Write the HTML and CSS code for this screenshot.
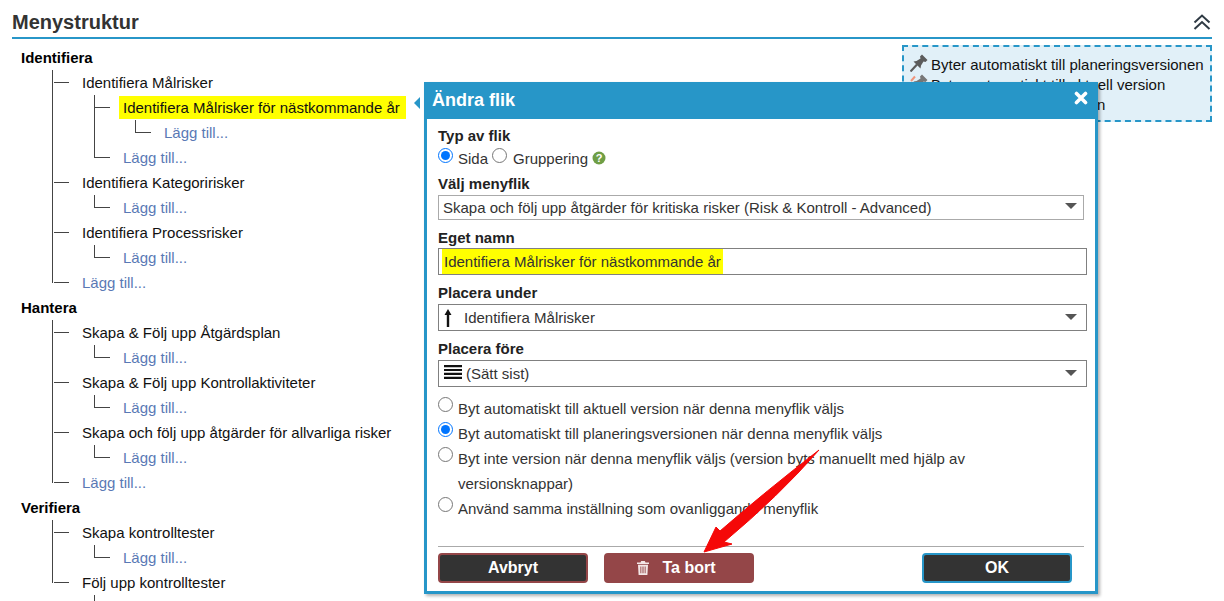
FILE: index.html
```html
<!DOCTYPE html>
<html lang="sv">
<head>
<meta charset="utf-8">
<title>Menystruktur</title>
<link rel="stylesheet" href="styles.css">
</head>
<body>
<main class="page">
  <header class="section-head">
    <h1>Menystruktur</h1>
    <svg class="collapse" viewBox="0 0 18 16" aria-hidden="true"><path d="M1.5 8.500 9 1.500l7.500 7M1.500 15 9 8l7.500 7" fill="none" stroke="#2f3a44" stroke-width="2"/></svg>
  </header>
  <div class="content">
    <nav class="tree">
      <div class="group">Identifiera</div>
      <ul class="lvl1">
        <li><span>Identifiera Målrisker</span>
          <ul class="lvl2">
            <li><span class="mark">Identifiera Målrisker för nästkommande år</span>
              <ul class="lvl3"><li><a>Lägg till...</a></li></ul>
            </li>
            <li><a>Lägg till...</a></li>
          </ul>
        </li>
        <li><span>Identifiera Kategoririsker</span>
          <ul class="lvl2"><li><a>Lägg till...</a></li></ul>
        </li>
        <li><span>Identifiera Processrisker</span>
          <ul class="lvl2"><li><a>Lägg till...</a></li></ul>
        </li>
        <li><a>Lägg till...</a></li>
      </ul>
      <div class="group">Hantera</div>
      <ul class="lvl1">
        <li><span>Skapa &amp; Följ upp Åtgärdsplan</span>
          <ul class="lvl2"><li><a>Lägg till...</a></li></ul>
        </li>
        <li><span>Skapa &amp; Följ upp Kontrollaktiviteter</span>
          <ul class="lvl2"><li><a>Lägg till...</a></li></ul>
        </li>
        <li><span>Skapa och följ upp åtgärder för allvarliga risker</span>
          <ul class="lvl2"><li><a>Lägg till...</a></li></ul>
        </li>
        <li><a>Lägg till...</a></li>
      </ul>
      <div class="group">Verifiera</div>
      <ul class="lvl1">
        <li><span>Skapa kontrolltester</span>
          <ul class="lvl2"><li><a>Lägg till...</a></li></ul>
        </li>
        <li class="cut"><span>Följ upp kontrolltester</span>
          <ul class="lvl2"><li class="stub"></li></ul>
        </li>
      </ul>
    </nav>
    <aside class="legend">
      <div class="legend-row">
        <svg class="pin" viewBox="0 0 18 18" aria-hidden="true"><path d="M12 0.500 17.500 6 15.500 8 13.500 7.500 11 11.500 10.500 14.500 3.500 7.500 6.500 7 10.500 4.500 10 2.500z" fill="#5c5c5c"/><path d="M7 10.500.5 17.500" stroke="#5c5c5c" stroke-width="2.200"/></svg>
        <span>Byter automatiskt till planeringsversionen</span>
      </div>
      <div class="legend-row">
        <svg class="pin" viewBox="0 0 18 18" aria-hidden="true"><path d="M1 7 5 2.500" stroke="#f0957c" stroke-width="2"/><path d="M12 0.500 17.500 6 15.500 8 13.500 7.500 11 11.500 10.500 14.500 3.500 7.500 6.500 7 10.500 4.500 10 2.500z" fill="#777"/></svg>
        <span>Byter automatiskt till aktuell version</span>
      </div>
      <div class="legend-row">
        <svg class="pin" viewBox="0 0 18 18" aria-hidden="true"><path d="M12 0.500 17.500 6 15.500 8 13.500 7.500 11 11.500 10.500 14.500 3.500 7.500 6.500 7 10.500 4.500 10 2.500z" fill="#9a9a9a"/></svg>
        <span>Byter inte till given version</span>
      </div>
    </aside>
  </div>
</main>

<div class="pointer"></div>

<section class="dialog">
  <div class="dialog-head">
    <h2>Ändra flik</h2>
    <svg class="close" viewBox="0 0 14 14" aria-hidden="true"><path d="M2.500 2.500 11.500 11.500M11.500 2.500 2.500 11.500" stroke="#fff" stroke-width="3.600" stroke-linecap="round"/></svg>
  </div>
  <div class="dialog-body">
    <div class="label first">Typ av flik</div>
    <div class="type-row">
      <input type="radio" name="typ" checked>
      <span class="t-sida">Sida</span>
      <input type="radio" name="typ">
      <span class="t-grupp">Gruppering</span>
      <svg class="help" viewBox="0 0 14 14" aria-hidden="true"><circle cx="7" cy="7" r="6.500" fill="#6f9e45"/><text x="7" y="11" text-anchor="middle" class="help-q">?</text></svg>
    </div>
    <div class="label l-valj">Välj menyflik</div>
    <div class="select narrow"><span>Skapa och följ upp åtgärder för kritiska risker (Risk &amp; Kontroll - Advanced)</span><i class="caret"></i></div>
    <div class="label l-eget">Eget namn</div>
    <div class="input"><span class="mark-input">Identifiera Målrisker för nästkommande år</span></div>
    <div class="label l-plac">Placera under</div>
    <div class="select wide">
      <svg class="up" viewBox="0 0 8 18" aria-hidden="true"><path d="M4 0 7.500 6H5.200v12H2.800V6H.5z" fill="#111"/></svg>
      <span>Identifiera Målrisker</span><i class="caret"></i>
    </div>
    <div class="label l-plac">Placera före</div>
    <div class="select wide">
      <svg class="bars" viewBox="0 0 18 14" aria-hidden="true"><path d="M0 0h18v2.200H0zM0 3.900h18v2.200H0zM0 7.800h18V10H0zM0 11.700h18v2.200H0z" fill="#111"/></svg>
      <span>(Sätt sist)</span><i class="caret"></i>
    </div>
    <div class="options">
      <label class="opt"><input type="radio" name="v"><span>Byt automatiskt till aktuell version när denna menyflik väljs</span></label>
      <label class="opt"><input type="radio" name="v" checked><span>Byt automatiskt till planeringsversionen när denna menyflik väljs</span></label>
      <label class="opt"><input type="radio" name="v"><span>Byt inte version när denna menyflik väljs (version byts manuellt med hjälp av versionsknappar)</span></label>
      <label class="opt"><input type="radio" name="v"><span>Använd samma inställning som ovanliggande menyflik</span></label>
    </div>
    <div class="actions">
      <button class="btn cancel">Avbryt</button>
      <button class="btn delete">
        <svg class="trash" viewBox="0 0 12 14" aria-hidden="true"><path d="M4.200 0h3.600l.7 1.500H12v1.400H0V1.500h3.500zM1 3.800h10l-.6 10.200H1.600zM3.400 5.500v6.800h.9V5.500zm2.100 0v6.800h1V5.500zm2.200 0v6.800h.9V5.500z" fill="#f3e6e6" fill-rule="evenodd"/></svg>
        Ta bort
      </button>
      <button class="btn ok">OK</button>
    </div>
  </div>
</section>

<svg class="red-arrow" viewBox="0 0 130 115" aria-hidden="true"><path d="M125 1Q85 47 30 93L38 95 10 103 22 78 26 82Q72 42 125 1z" fill="#f50808" stroke="#f50808" stroke-width="1" stroke-linejoin="round"/></svg>
</body>
</html>
```
FILE: styles.css
```css
* { box-sizing: border-box; }
html, body { margin: 0; height: 601px; overflow: hidden; background: #fff; }
body { font: 15px/25px "Liberation Sans", Arial, sans-serif; color: #111; position: relative; }
ul { list-style: none; margin: 0; padding: 0; }

.page { padding: 0 12px; }
.section-head { height: 39px; display: flex; align-items: center; justify-content: space-between; border-bottom: 2px solid #2796c8; padding: 7px 1px 0 0; }
.section-head h1 { margin: 0; font-size: 20px; font-weight: bold; color: #333; line-height: 30px; }
.collapse { width: 18px; height: 16px; margin-top: -1px; }

.content { display: flex; justify-content: space-between; align-items: flex-start; padding-top: 6px; height: 562px; overflow: hidden; }
.tree { padding: 0 0 0 9px; }
.group { font-weight: bold; height: 25px; color: #000; }
.tree li { position: relative; }
.tree a { color: #5a79b5; }
.lvl1 { margin-left: 31px; }
.lvl1 > li { padding-left: 30px; }
.lvl2 { margin-left: 12px; }
.lvl2 > li { padding-left: 29px; }
.lvl3 { margin-left: 12px; }
.lvl3 > li { padding-left: 29px; }
.tree li::before { content: ""; position: absolute; left: 1px; top: 12px; width: 15px; height: 1px; background: #444; }
.lvl1 > li::before { left: 2px; }
.tree li::after { content: ""; position: absolute; left: 0; top: 0; bottom: 0; width: 1px; background: #444; }
.tree li:last-child::after { bottom: auto; height: 13px; }
.tree .cut::after { height: auto; bottom: 0; }
.stub { height: 25px; }
.mark { background: #ff0; padding: 3px 6px 3px 4px; margin-left: -4px; }

.legend { width: 310px; height: 77px; background: #e1f0f8; border: 2px dashed #2796c8; padding: 8px 0 0 6px; line-height: 20px; }
.legend-row { display: flex; align-items: center; gap: 3px; height: 20px; white-space: nowrap; }
.pin { width: 18px; height: 18px; flex: none; margin-top: -4px; }

.pointer { position: absolute; left: 414px; top: 97px; width: 0; height: 0; border: 6px solid transparent; border-left: 0; border-right: 6px solid #2796c8; }

.dialog { position: absolute; left: 424px; top: 82px; width: 674px; height: 512px; background: #fff; border: 2px solid #2796c8; border-width: 1px 3px 3px 3px; box-shadow: 2px 2px 3px rgba(0,0,0,.3); }
.dialog-head { height: 36px; margin: 0 -1px 0 0; background: #2796c8; display: flex; align-items: center; justify-content: space-between; padding: 0 8px 0 5px; }
.dialog-head h2 { margin: 0; color: #fff; font-size: 18px; line-height: 34px; height: 34px; align-self: flex-start; font-weight: bold; }
.close { width: 14px; height: 14px; margin-top: -6px; }
.dialog-body { padding: 0 10px 0 11px; }
.label { font-weight: bold; color: #222; line-height: 20px; }
.first { margin-top: 7px; }
.l-valj { margin-top: 6px; }
.l-eget { margin-top: 8px; }
.l-plac { margin-top: 8px; margin-bottom: 1px; }
.type-row { display: flex; align-items: center; height: 20px; margin-top: 2px; color: #333; }
input[type=radio] { width: 15px; height: 15px; margin: 0; flex: none; accent-color: #0075ff; }
.type-row input { margin-top: -5px; }
.t-sida { margin: 0 0 0 5px; width: 34px; }
.t-grupp { margin-left: 6px; }
.help { width: 14px; height: 14px; margin-left: 4px; }
.help-q { font: bold 11px "Liberation Sans", sans-serif; fill: #fff; }

.select, .input { display: flex; align-items: center; border: 1px solid #808080; background: #fff; color: #333; position: relative; line-height: 20px; }
.select.narrow { width: 646px; height: 25px; margin-top: 1px; padding-left: 4px; border-color: #aaa; }
.input { width: 649px; height: 27px; padding-left: 3px; }
.select.wide { width: 649px; height: 27px; padding-left: 4px; }
.mark-input { background: #ff0; padding: 2px; color: #333; line-height: 21px; }
.caret { position: absolute; right: 9px; top: 9px; border: 6px solid transparent; border-top: 6px solid #555; border-bottom: 0; }
.narrow .caret { right: 6px; top: 7px; }
.up { width: 8px; height: 18px; margin: 0 12px 0 1px; }
.bars { width: 18px; height: 14px; margin: 0 4px 4px 1px; }

.options { margin-top: 5px; color: #333; }
.opt { display: flex; align-items: flex-start; gap: 5px; }
.opt input { margin: 5px 0 0 0; }
.opt span { flex: 1; padding-top: 4px; margin-bottom: -4px; padding-right: 30px; }

.actions { position: absolute; left: 11px; right: 11px; bottom: 8px; border-top: 1px solid #aaa; padding: 6px 12px 0 0; display: flex; }
.btn { width: 150px; height: 30px; border-radius: 4px; border: 2px solid; font: bold 16px "Liberation Sans", Arial, sans-serif; color: #fff; background: #333; padding: 0; display: flex; align-items: center; justify-content: center; }
.cancel { border-color: #944648; }
.delete { background: #944648; border-color: #944648; margin-left: 16px; gap: 13px; padding-right: 5px; }
.ok { border-color: #2796c8; margin-left: auto; }
.trash { width: 12px; height: 14px; }

.red-arrow { position: absolute; left: 694px; top: 449px; width: 130px; height: 115px; }
```
